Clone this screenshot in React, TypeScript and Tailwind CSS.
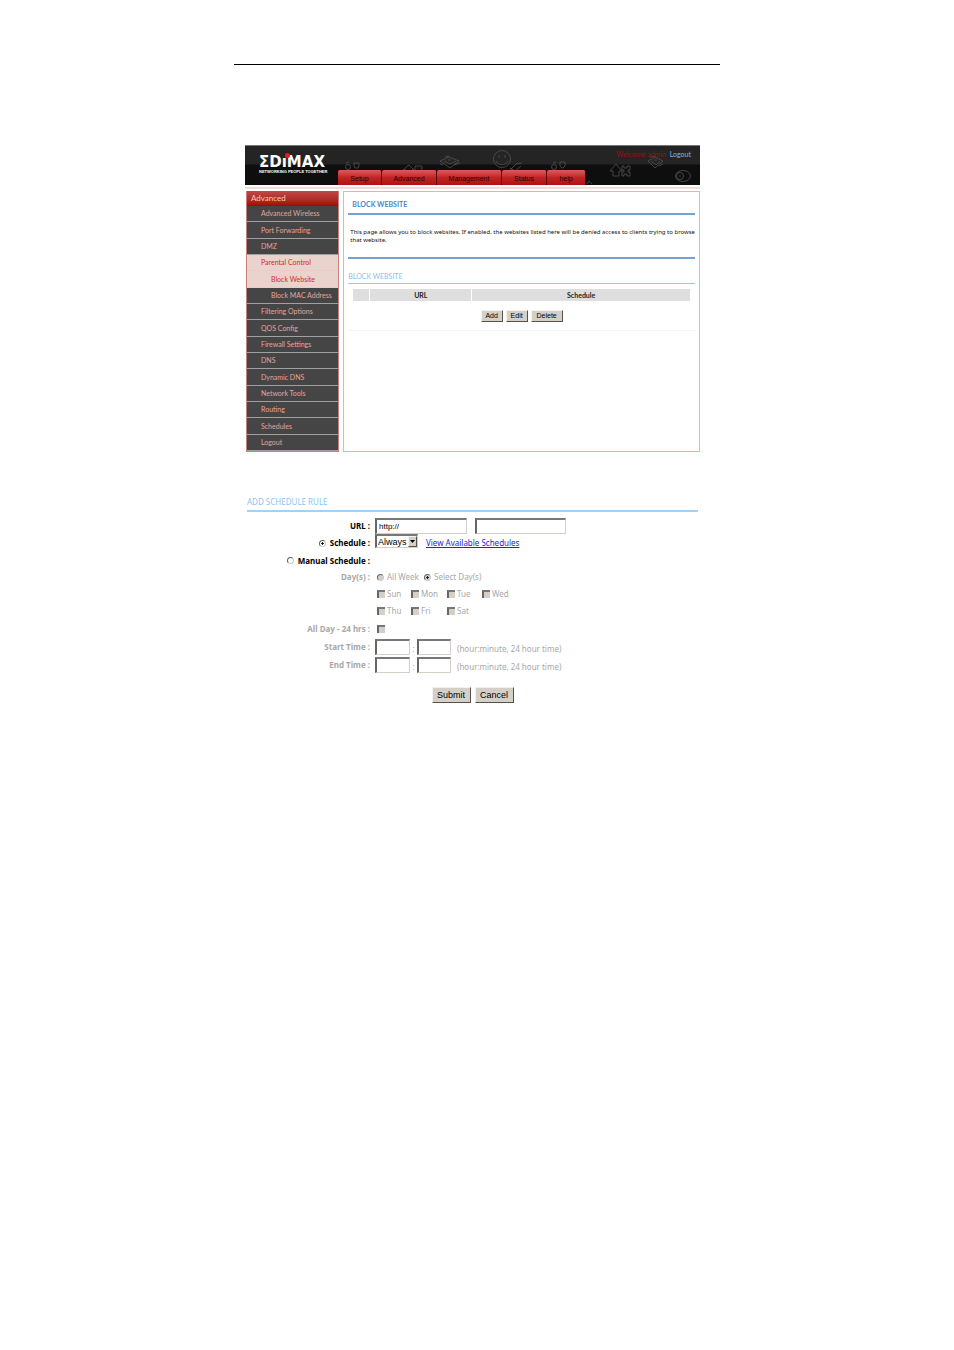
import { useState } from 'react';
import type { ReactNode } from 'react';

const TABS = [
  { label: 'Setup', width: 'w-11' },
  { label: 'Advanced', width: 'w-[55px]' },
  { label: 'Management', width: 'w-[65px]' },
  { label: 'Status', width: 'w-[45px]' },
  { label: 'help', width: 'w-[39px]' },
];

const MENU = [
  { label: 'Advanced Wireless' },
  { label: 'Port Forwarding' },
  { label: 'DMZ' },
  { label: 'Parental Control', active: true },
  { label: 'Block Website', active: true, sub: true },
  { label: 'Block MAC Address', sub: true },
  { label: 'Filtering Options' },
  { label: 'QOS Config' },
  { label: 'Firewall Settings' },
  { label: 'DNS' },
  { label: 'Dynamic DNS' },
  { label: 'Network Tools' },
  { label: 'Routing' },
  { label: 'Schedules' },
  { label: 'Logout' },
];

const DAYS = ['Sun', 'Mon', 'Tue', 'Wed', 'Thu', 'Fri', 'Sat'];

const BEVEL = 'border border-t-[#f4f2ee] border-l-[#f4f2ee] border-r-[#55524c] border-b-[#55524c] bg-[#d4d0c8]';
const SUNKEN = 'border-t-2 border-l-2 border-r border-b border-t-[#777] border-l-[#666] border-r-[#d4d0c8] border-b-[#d4d0c8] bg-white';

function Logo() {
  return (
    <div className="relative ml-[14px] flex w-[68px] flex-col pt-[9px] text-white" role="img" aria-label="EDIMAX">
      <span className="absolute top-[7px] left-[26px] size-[5px] rounded-full bg-[#f01818]" />
      <span className="font-['DejaVu_Sans',sans-serif] text-[15px] leading-[14px] font-bold">ΣDıMAX</span>
      <span className="font-['Liberation_Sans',sans-serif] text-[4px] leading-[5px] font-bold whitespace-nowrap">
        NETWORKING PEOPLE TOGETHER
      </span>
    </div>
  );
}

/** Sketchy line icons scattered over the banner. */
function Doodles() {
  return (
    <svg
      className="absolute top-0 right-0 h-10 w-[362px]"
      viewBox="0 0 362 40"
      fill="none"
      stroke="#5a5a5a"
      strokeWidth="0.7"
      aria-hidden
    >
      <circle cx="10" cy="21" r="2.5" />
      <path d="M16 17h5v3l-1 2h-3l-1-2zM8 17l3-1" />
      <path d="M68 26v-2h-3l6-5 5 5h-2v2M77 20h7v5h-7zM79 22h1M82 22h1" />
      <path d="M102 15l9-4 10 4-9 7zM106 15l6 3 6-3M107 11l4-1M116 19l6-2M105 19l-3-1M110 14h3" />
      <circle cx="164" cy="13" r="8.5" />
      <path d="M161 9v3M167 9v3M158 15c2 5 10 5 12 0M170 26l8-8 6-1M176 26l7-6M172 22l5 3" />
      <circle cx="216" cy="21" r="2.5" />
      <path d="M224 22l-2-2v-4h5v4l-2 2zM215 17l3-1" />
      <path d="M275 30v-5h-3l6-7 6 7h-3v5zM284 20h2v2h3v-2h3v4h-2v2h2v4h-3v-2h-3v2h-2v-4h2v-2h-2z" />
      <path d="M310 15l7-4 8 4-8 7zM313 15l5 4 4-4M312 11l5-1M321 20l4-2M316 14h3" />
      <ellipse cx="345" cy="30" rx="7.5" ry="5.5" />
      <circle cx="342" cy="30" r="3.5" />
      <path d="M341 30h2M249 38l2-3 3 3" />
    </svg>
  );
}

function Banner() {
  return (
    <header className="relative flex h-10 border-t border-[#777] bg-linear-to-b from-[#242424] from-45% to-[#0e0e0e] to-50%">
      <Logo />
      <Doodles />
      <nav className="relative ml-[11px] flex self-end font-['Liberation_Sans',sans-serif] text-[7px] text-[#2c0000]">
        {TABS.map((t) => (
          <a
            key={t.label}
            href="#"
            className={`${t.width} flex h-[15px] items-center justify-center rounded-t-xs border-r border-[#500] bg-linear-to-b from-[#dc5a5a] via-[#c02424] to-[#b01010] pt-1`}
          >
            {t.label}
          </a>
        ))}
      </nav>
      <div className="absolute top-1 right-[9px] flex gap-1 font-['Lato',sans-serif] text-[7px] leading-2">
        <span className="text-[#9c1010]">Welcome admin</span>
        <a href="#" className="text-[#7fb6ee]">
          Logout
        </a>
      </div>
    </header>
  );
}

function SideMenu() {
  return (
    <aside className="flex w-[94px] flex-col border-x border-b border-[#c98078] font-['Lato',sans-serif] text-[7px]">
      <h2 className="h-[15px] bg-linear-to-b from-[#c04848] to-[#a00800] pl-1 text-[8px] leading-[15px] text-[#ffc8bc]">
        Advanced
      </h2>
      <ul className="flex flex-1 flex-col">
        {MENU.map((m) => (
          <li
            key={m.label}
            className={`flex flex-1 items-center border-b ${m.active ? 'border-[#eecbc6] bg-[#ead2cd] text-[#d82828]' : 'border-[#a0a0a0] bg-[#454545] text-[#e5a49c]'} ${m.sub ? 'pl-6' : 'pl-[14px]'}`}
          >
            <a href="#">{m.label}</a>
          </li>
        ))}
      </ul>
    </aside>
  );
}

function BlockWebsite() {
  return (
    <main className="min-h-[261px] flex-1 border border-[#ecb0a8] px-1 font-['Lato',sans-serif] text-[7px]">
      <h1 className="pt-[7px] pb-1 pl-1 leading-[10px] font-bold text-[#4a86c8]">BLOCK WEBSITE</h1>
      <div className="h-[46px] border-y-2 border-[#74a0d4] pt-[13px] pl-[2px] font-['Noto_Sans',sans-serif] text-[6px] leading-2 whitespace-nowrap text-[#111]">
        This page allows you to block websites. If enabled, the websites listed here will be denied access to clients
        trying to browse
        <br />
        that website.
      </div>
      <h2 className="mt-3 border-b border-[#9cc8f0] pb-[2px] leading-[10px] text-[#8cc0f0]">BLOCK WEBSITE</h2>
      <div className="px-1">
        <table className="mt-[5px] w-full table-fixed border-separate border-spacing-x-px border-spacing-y-0 text-[#222]">
          <thead>
            <tr className="h-3 bg-[#dedede] leading-3">
              <th className="w-4" />
              <th className="w-[101px]">URL</th>
              <th>Schedule</th>
            </tr>
          </thead>
        </table>
      </div>
      <div className="mt-[9px] flex justify-center gap-[3px] border-b border-[#f8f2f2] pb-2 font-['Liberation_Sans',sans-serif]">
        <button className={`${BEVEL} h-3 w-[22px] leading-[10px]`}>Add</button>
        <button className={`${BEVEL} h-3 w-[22px] leading-[10px]`}>Edit</button>
        <button className={`${BEVEL} h-3 w-8 leading-[10px]`}>Delete</button>
      </div>
    </main>
  );
}

function Row({ label, muted, height, children }: { label: ReactNode; muted?: boolean; height: string; children?: ReactNode }) {
  return (
    <div className={`flex items-center gap-[5px] ${height} ${muted ? 'text-[#a8a8a8]' : 'text-black'}`}>
      <div className="flex w-[123px] shrink-0 items-center justify-end gap-1 font-bold">{label}</div>
      <div className="flex items-center">{children}</div>
    </div>
  );
}

function Radio(props: { id: string; name: string; checked: boolean; onChange: () => void; muted?: boolean }) {
  const { muted, ...rest } = props;
  return (
    <input
      type="radio"
      {...rest}
      className={`size-[7px] shrink-0 appearance-none rounded-full border border-t-[#666] border-l-[#666] border-r-[#ccc] border-b-[#ccc] checked:bg-radial checked:from-[#222] checked:from-30% checked:to-40% ${muted ? 'bg-[#d4d0c8] checked:to-[#d4d0c8]' : 'bg-white checked:to-white'}`}
    />
  );
}

function Check({ id }: { id: string }) {
  return (
    <input
      type="checkbox"
      id={id}
      disabled
      className="size-2 shrink-0 appearance-none border-t-2 border-l-2 border-t-[#777] border-l-[#666] bg-[#d4d0c8]"
    />
  );
}

function TimeFields({ name }: { name: string }) {
  return (
    <>
      <input aria-label={`${name} hour`} className={`${SUNKEN} h-4 w-[35px] px-1`} />
      <span className="w-[7px] pt-1 text-center">:</span>
      <input aria-label={`${name} minute`} className={`${SUNKEN} h-4 w-[34px] px-1`} />
      <span className="ml-[6px] pt-1">(hour:minute, 24 hour time)</span>
    </>
  );
}

function ScheduleForm() {
  const [mode, setMode] = useState('schedule');
  const [range, setRange] = useState('days');
  const [url, setUrl] = useState('http://');

  return (
    <form className="mx-[2px] mt-[45px] text-[8px] leading-[10px]" onSubmit={(e) => e.preventDefault()}>
      <h2 className="mb-[5px] border-b-2 border-[#a0d0fc] pb-[3px] text-[#8cc4f8]">ADD SCHEDULE RULE</h2>
      <Row height="h-[17px]" label={<label htmlFor="url">URL :</label>}>
        <input
          id="url"
          value={url}
          onChange={(e) => setUrl(e.target.value)}
          className={`${SUNKEN} h-4 w-[92px] px-[2px] font-['Liberation_Sans',sans-serif]`}
        />
        <input aria-label="URL path" className={`${SUNKEN} ml-2 h-4 w-[91px] px-[2px]`} />
      </Row>
      <Row
        height="h-[18px]"
        label={
          <>
            <Radio id="schedule" name="mode" checked={mode === 'schedule'} onChange={() => setMode('schedule')} />
            <label htmlFor="schedule">Schedule :</label>
          </>
        }
      >
        <div className="relative -mt-1">
          <select
            aria-label="Schedule"
            className={`${SUNKEN} block h-[14px] w-[43px] appearance-none pl-px font-['Liberation_Sans',sans-serif] text-[9px] leading-[10px]`}
          >
            <option>Always</option>
          </select>
          <span className={`${BEVEL} pointer-events-none absolute top-[2px] right-px flex h-[11px] w-[9px] items-center justify-center`}>
            <svg className="h-[3px] w-[5px]" viewBox="0 0 5 3" aria-hidden>
              <path d="M0 0h5L2.5 3z" />
            </svg>
          </span>
        </div>
        <a href="#" className="ml-2 text-[#2222ee] underline">
          View Available Schedules
        </a>
      </Row>
      <Row
        height="h-[17px]"
        label={
          <>
            <Radio id="manual" name="mode" checked={mode === 'manual'} onChange={() => setMode('manual')} />
            <label htmlFor="manual">Manual Schedule :</label>
          </>
        }
      />
      <Row height="h-4" muted label="Day(s) :">
        <div className="ml-[2px] flex items-center gap-[3px]">
          <Radio muted id="week" name="range" checked={range === 'week'} onChange={() => setRange('week')} />
          <label htmlFor="week" className="w-[34px] whitespace-nowrap">
            All Week
          </label>
          <Radio muted id="days" name="range" checked={range === 'days'} onChange={() => setRange('days')} />
          <label htmlFor="days">Select Day(s)</label>
        </div>
      </Row>
      {[DAYS.slice(0, 4), DAYS.slice(4)].map((days, i) => (
        <Row key={i} height="h-[17px]" muted label="">
          <div className="ml-[2px] grid grid-cols-[34px_36px_35px_35px]">
            {days.map((d) => (
              <div key={d} className="flex items-center gap-[2px]">
                <Check id={d} />
                <label htmlFor={d}>{d}</label>
              </div>
            ))}
          </div>
        </Row>
      ))}
      <Row height="h-[19px]" muted label={<label htmlFor="allday">All Day - 24 hrs :</label>}>
        <div className="ml-[2px] flex">
          <Check id="allday" />
        </div>
      </Row>
      <Row height="h-[18px]" muted label="Start Time :">
        <TimeFields name="Start" />
      </Row>
      <Row height="h-[17px]" muted label="End Time :">
        <TimeFields name="End" />
      </Row>
      <div className="mt-[14px] flex justify-center gap-1 font-['Liberation_Sans',sans-serif] text-[9px]">
        <button type="submit" className={`${BEVEL} h-4 w-[39px]`}>
          Submit
        </button>
        <button type="button" className={`${BEVEL} h-4 w-[39px]`}>
          Cancel
        </button>
      </div>
    </form>
  );
}

export default function App() {
  return (
    <div className="min-h-screen bg-white pt-16 font-['Noto_Sans',sans-serif]">
      <div className="mx-auto max-w-[486px] border-t border-black pt-20 pr-5 pl-[11px]">
        <Banner />
        <div className="mt-[2px] border-t border-b border-t-[#e4dede] border-b-[#f8dcd8]" />
        <div className="mt-[2px] flex gap-1 pl-px">
          <SideMenu />
          <BlockWebsite />
        </div>
        <ScheduleForm />
      </div>
    </div>
  );
}
